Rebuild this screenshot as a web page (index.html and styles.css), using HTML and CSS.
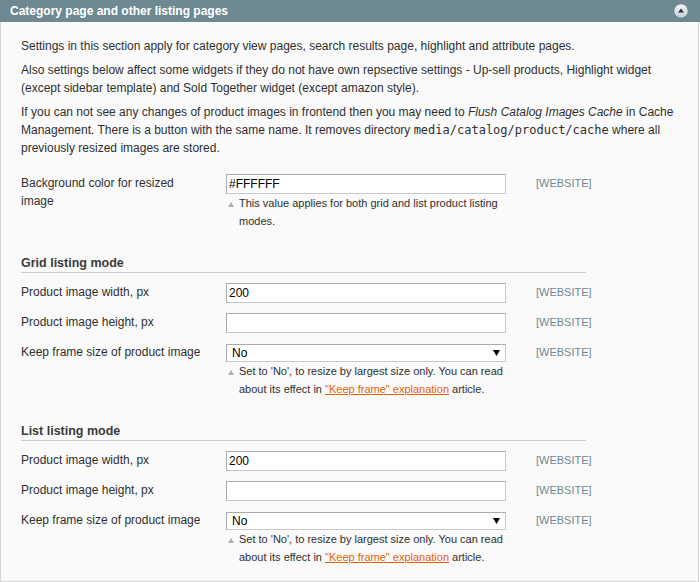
FILE: index.html
```html
<!DOCTYPE html>
<html>
<head>
<meta charset="utf-8">
<link rel="stylesheet" href="styles.css">
</head>
<body>
<div class="section">
  <div class="section-head">
    <span class="title">Category page and other listing pages</span>
    <svg class="toggle" width="16" height="16" viewBox="0 0 16 16">
      <defs>
        <linearGradient id="tg" x1="0" y1="0" x2="0" y2="1">
          <stop offset="0" stop-color="#f6f7f7"/>
          <stop offset="1" stop-color="#c4cdd0"/>
        </linearGradient>
      </defs>
      <circle cx="8" cy="8.5" r="7.4" fill="#5f7880" opacity="0.5"/>
      <circle cx="8" cy="8" r="6.8" fill="url(#tg)"/>
      <path d="M5 9.6 L8 5.4 L11 9.6 Z" fill="#1f3447"/>
    </svg>
  </div>
  <div class="section-body">
    <div class="intro">
      <p>Settings in this section apply for category view pages, search results page, highlight and attribute pages.</p>
      <p>Also settings below affect some widgets if they do not have own repsective settings - Up-sell products, Highlight widget (except sidebar template) and Sold Together widget (except amazon style).</p>
      <p>If you can not see any changes of product images in frontend then you may need to <em>Flush Catalog Images Cache</em> in Cache Management. There is a button with the same name. It removes directory <code>media/catalog/product/cache</code> where all previously resized images are stored.</p>
    </div>

    <div class="row">
      <div class="label">Background color for resized image</div>
      <div class="value">
        <input class="input" type="text" value="#FFFFFF">
        <div class="note">
          <span class="note-icon"><svg width="6" height="5" viewBox="0 0 6 5"><path d="M0 5 L3 0 L6 5 Z" fill="#a3b1b7"/></svg></span>
          <span class="note-text">This value applies for both grid and list product listing modes.</span>
        </div>
      </div>
      <div class="scope">[WEBSITE]</div>
    </div>

    <h4 class="group">Grid listing mode</h4>

    <div class="row">
      <div class="label">Product image width, px</div>
      <div class="value"><input class="input" type="text" value="200"></div>
      <div class="scope">[WEBSITE]</div>
    </div>
    <div class="row">
      <div class="label">Product image height, px</div>
      <div class="value"><input class="input" type="text" value=""></div>
      <div class="scope">[WEBSITE]</div>
    </div>
    <div class="row">
      <div class="label">Keep frame size of product image</div>
      <div class="value">
        <div class="select"><span>No</span><svg width="7" height="6" viewBox="0 0 7 6"><path d="M0 0 L7 0 L3.5 6 Z" fill="#000"/></svg></div>
        <div class="note">
          <span class="note-icon"><svg width="6" height="5" viewBox="0 0 6 5"><path d="M0 5 L3 0 L6 5 Z" fill="#a3b1b7"/></svg></span>
          <span class="note-text">Set to 'No', to resize by largest size only. You can read about its effect in <a href="#">"Keep frame" explanation</a> article.</span>
        </div>
      </div>
      <div class="scope">[WEBSITE]</div>
    </div>

    <h4 class="group">List listing mode</h4>

    <div class="row">
      <div class="label">Product image width, px</div>
      <div class="value"><input class="input" type="text" value="200"></div>
      <div class="scope">[WEBSITE]</div>
    </div>
    <div class="row">
      <div class="label">Product image height, px</div>
      <div class="value"><input class="input" type="text" value=""></div>
      <div class="scope">[WEBSITE]</div>
    </div>
    <div class="row">
      <div class="label">Keep frame size of product image</div>
      <div class="value">
        <div class="select"><span>No</span><svg width="7" height="6" viewBox="0 0 7 6"><path d="M0 0 L7 0 L3.5 6 Z" fill="#000"/></svg></div>
        <div class="note">
          <span class="note-icon"><svg width="6" height="5" viewBox="0 0 6 5"><path d="M0 5 L3 0 L6 5 Z" fill="#a3b1b7"/></svg></span>
          <span class="note-text">Set to 'No', to resize by largest size only. You can read about its effect in <a href="#">"Keep frame" explanation</a> article.</span>
        </div>
      </div>
      <div class="scope">[WEBSITE]</div>
    </div>
  </div>
</div>
</body>
</html>
```

FILE: styles.css
```css
html, body {
  margin: 0;
  padding: 0;
  background: #ffffff;
}

body {
  font-family: "Liberation Sans", Arial, sans-serif;
  font-size: 12px;
  color: #2f2f2f;
}

.section {
  width: 700px;
}

.section-head {
  height: 22px;
  background: #6f8992;
  display: flex;
  align-items: center;
  justify-content: space-between;
  padding: 0 11px 0 10px;
  box-sizing: border-box;
}

.title {
  color: #ffffff;
  font-weight: bold;
  font-size: 12px;
  line-height: 22px;
}

.toggle {
  display: block;
}

.section-body {
  width: 699px;
  box-sizing: border-box;
  background: #fafafa;
  border: 1px solid #d6d6d6;
  border-top: 0;
  padding: 15px 20px 15px 20px;
}

.intro {
  margin-bottom: 17px;
}

.intro p {
  margin: 0 0 6px;
  line-height: 18px;
}

.intro code {
  font-family: "DejaVu Sans Mono", monospace;
  font-size: 12px;
}

.row {
  display: grid;
  grid-template-columns: 205px 280px auto;
  margin-bottom: 10px;
}

.row:last-child {
  margin-bottom: 0;
}

.label {
  width: 185px;
  line-height: 18px;
}

.value {
  display: flex;
  flex-direction: column;
}

.input {
  display: block;
  width: 280px;
  height: 20px;
  box-sizing: border-box;
  margin: 0;
  padding: 0 2px;
  border: 1px solid;
  border-color: #aaaaaa #c8c8c8 #c8c8c8 #aaaaaa;
  background: #ffffff;
  font-family: "Liberation Sans", Arial, sans-serif;
  font-size: 12px;
  color: #000000;
  outline: none;
}

.select {
  width: 280px;
  height: 18px;
  margin-top: 1px;
  box-sizing: border-box;
  border: 1px solid;
  border-color: #aaaaaa #c8c8c8 #c8c8c8 #aaaaaa;
  background: #ffffff;
  display: flex;
  align-items: center;
  justify-content: space-between;
  padding: 0 5px 0 5px;
  font-size: 12px;
  color: #000000;
}

.select svg {
  display: block;
}

.note {
  display: flex;
  font-size: 11px;
  line-height: 18px;
}

.note-icon {
  flex: 0 0 13px;
  box-sizing: border-box;
  padding-left: 2px;
  padding-top: 8px;
}

.note-icon svg {
  display: block;
}

.note-text {
  flex: 1;
}

.note a {
  color: #eb5e00;
  text-decoration: underline;
}

.scope {
  padding-left: 30px;
  font-size: 11px;
  line-height: 18px;
  color: #6f8992;
}

.group {
  width: 565px;
  margin: 24px 0 10px;
  font-size: 12.5px;
  font-weight: bold;
  line-height: 18px;
  color: #3a3a3a;
  border-bottom: 1px solid #cccccc;
}
```
